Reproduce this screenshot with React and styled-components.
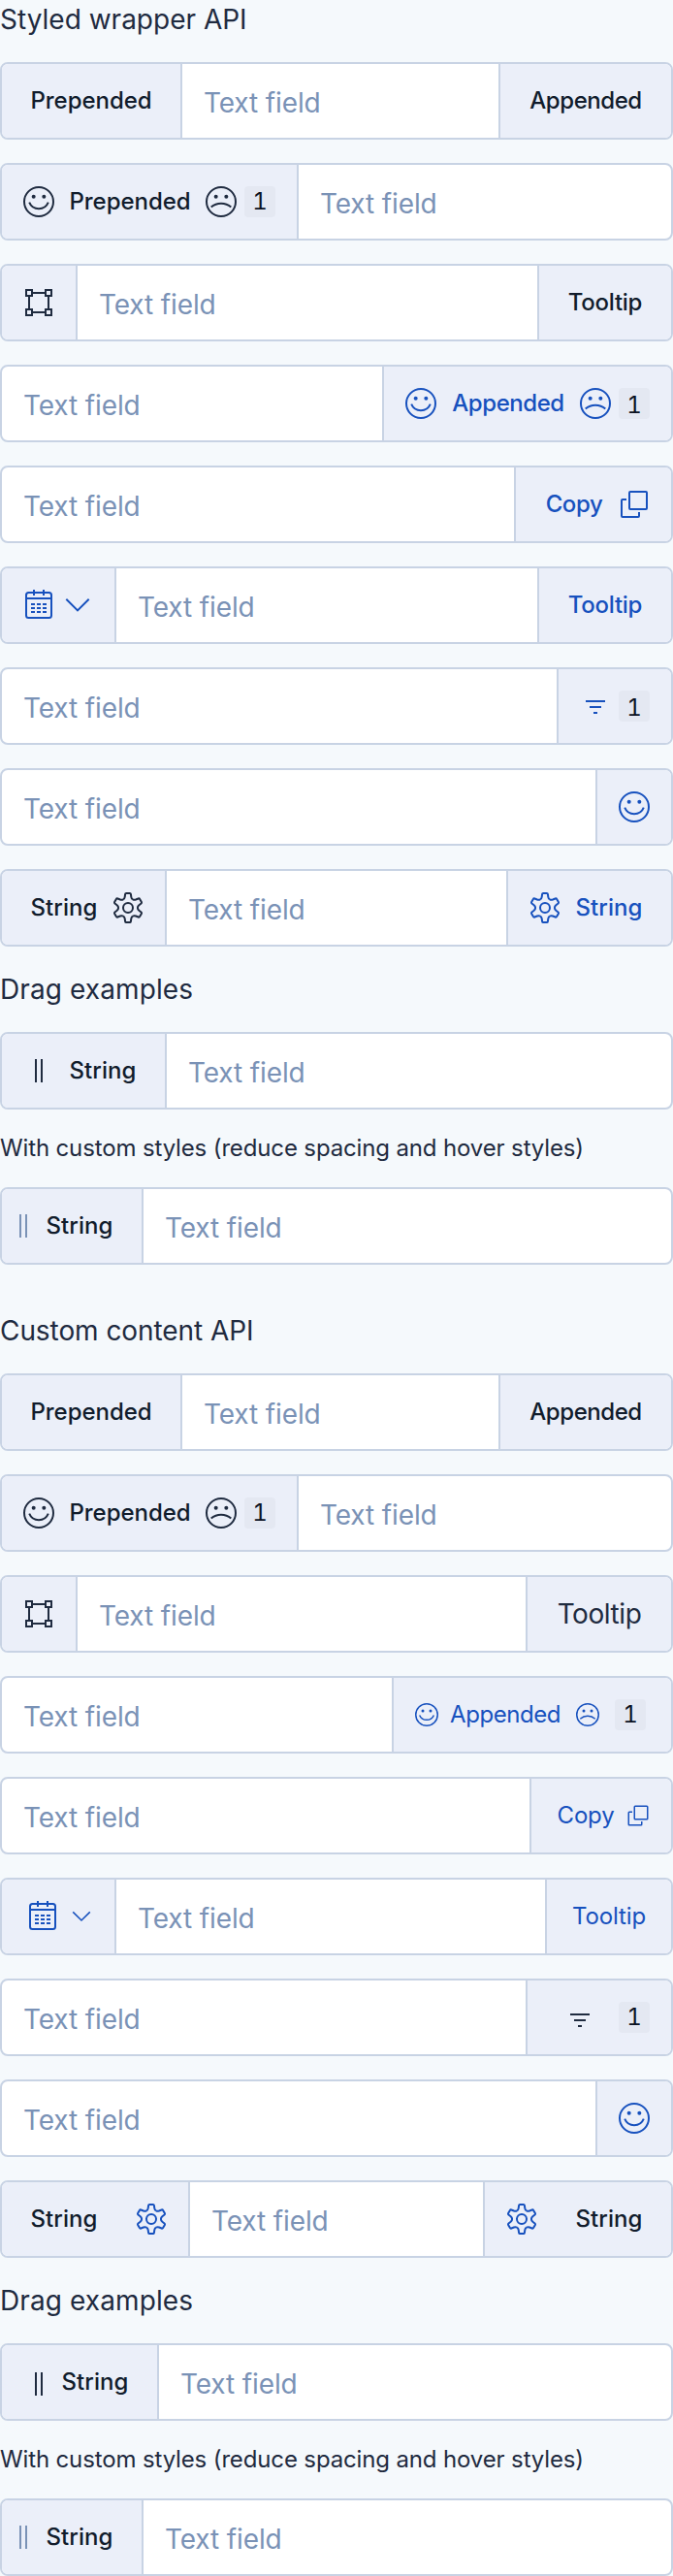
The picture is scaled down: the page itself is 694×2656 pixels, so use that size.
import React from "react";
import styled, { createGlobalStyle } from "styled-components";

const color = {
  page: "#f5f9fc",
  addon: "#ebeff9",
  border: "#c8d3e4",
  text: "#1f2b40",
  strong: "#111c2c",
  placeholder: "#7a92b6",
  action: "#1751be",
  badge: "#e4e8f2",
};

const GlobalStyle = createGlobalStyle`
  *, *::before, *::after { box-sizing: border-box; }
  body {
    margin: 0;
    background: ${color.page};
    color: ${color.text};
    font-family: Inter, "Liberation Sans", sans-serif;
  }
`;

const Page = styled.main`
  display: flex;
  flex-direction: column;
  gap: 48px;
`;

const Section = styled.section`
  display: flex;
  flex-direction: column;
  gap: 24px;
`;

const Heading = styled.h2`
  margin: 0;
  font-size: 28px;
  line-height: 40px;
  font-weight: 400;
  letter-spacing: ${(p) => p.$spacing ?? 0}px;
`;

const Note = styled.p`
  margin: 0;
  font-size: 24px;
  line-height: 32px;
  letter-spacing: -0.14px;
`;

const Group = styled.div`
  display: flex;
  height: 80px;
  border: 2px solid ${color.border};
  border-radius: 8px;
  background: #fff;
  overflow: hidden;
`;

const Field = styled.div`
  flex: 1;
  min-width: 0;
  display: flex;
  align-items: center;
  padding: 4px 22px 0;
  font-size: 28px;
  line-height: 40px;
  letter-spacing: -0.12px;
  color: ${color.placeholder};
`;

const Addon = styled.div`
  flex: none;
  display: flex;
  align-items: center;
  gap: ${(p) => p.$gap ?? 8}px;
  padding: 0 ${(p) => p.$padRight ?? 22}px 0 ${(p) => p.$padLeft ?? 22}px;
  background: ${color.addon};
  color: ${(p) => (p.$action ? color.action : color.text)};
`;

const Prepend = styled(Addon)`
  border-right: 2px solid ${color.border};
`;

const Append = styled(Addon)`
  border-left: 2px solid ${color.border};
`;

const Label = styled.span`
  width: ${(p) => p.$width}px;
  font-size: 24px;
  line-height: 32px;
  font-weight: 500;
  letter-spacing: ${(p) => p.$spacing ?? 0}px;
  text-align: center;
  white-space: nowrap;
  color: ${(p) => (p.$action ? color.action : color.strong)};
`;

const LinkText = styled.span`
  width: ${(p) => p.$width}px;
  margin-left: ${(p) => p.$pull ?? 0}px;
  font-size: 24px;
  line-height: 32px;
  font-weight: 400;
  letter-spacing: ${(p) => p.$spacing ?? 0}px;
  text-align: center;
  white-space: nowrap;
`;

const BodyText = styled.span`
  width: 104px;
  font-size: 28px;
  line-height: 40px;
  letter-spacing: -0.43px;
  text-align: center;
`;

const Badge = styled.span`
  width: 32px;
  height: 32px;
  padding-top: ${(p) => (p.$low ? 2 : 0)}px;
  border-radius: 4px;
  background: ${color.badge};
  color: #0b1222;
  font-size: 24px;
  line-height: 32px;
  font-weight: 400;
  font-variant-numeric: tabular-nums;
  text-align: center;
`;

const Svg = styled.svg`
  flex: none;
  display: block;
  width: ${(p) => p.$size}px;
  height: ${(p) => p.$size}px;
  margin-top: ${(p) => p.$drop}px;
  color: ${(p) => p.$tone ?? "inherit"};
  overflow: visible;
`;

const Icon = ({ size = 32, drop = 0, tone, children }) => (
  <Svg
    $size={size}
    $drop={drop}
    $tone={tone}
    viewBox="0 0 32 32"
    fill="none"
    stroke="currentColor"
    strokeWidth="2"
    aria-hidden="true"
  >
    {children}
  </Svg>
);

const Face = ({ mouth, ...rest }) => (
  <Icon {...rest}>
    <circle cx="16" cy="16" r="15" />
    <circle cx="10.67" cy="10.67" r="2" fill="currentColor" stroke="none" />
    <circle cx="21.33" cy="10.67" r="2" fill="currentColor" stroke="none" />
    <path d={mouth} />
  </Icon>
);

const Smile = (p) => <Face {...p} mouth="M6.2 16.6a10.6 10.6 0 0 0 19.6 0" />;
const Sad = (p) => <Face {...p} mouth="M5.7 21.6a15.6 15.6 0 0 1 20.6 0" />;

const Bounds = (p) => (
  <Icon {...p}>
    <path d="M3 3h6v6H3zM23 3h6v6h-6zM3 23h6v6H3zM23 23h6v6h-6zM10 6h12M10 26h12M6 10v12M26 10v12" />
  </Icon>
);

const Calendar = (p) => (
  <Icon {...p}>
    <rect x="3" y="3" width="26" height="26" rx="2.5" />
    <path d="M3 9h26M11 0v6M21 0v6M8 15h4M14 15h4M20 15h4M8 19h4M14 19h4M20 19h4M8 23h4M14 23h4M20 23h4" />
  </Icon>
);

const Chevron = (p) => (
  <Icon {...p}>
    <path d="M4.3 9.8 16 21.4 27.7 9.8" />
  </Icon>
);

const Copy = (p) => (
  <Icon {...p}>
    <rect x="11" y="3" width="18" height="18" rx="1" />
    <path d="M8 11H4a1 1 0 0 0-1 1v16a1 1 0 0 0 1 1h16a1 1 0 0 0 1-1v-4" />
  </Icon>
);

const Filter = (p) => (
  <Icon {...p}>
    <path d="M6 11h20M10 17h12M14 23h4" />
  </Icon>
);

const Drag = (p) => (
  <Icon {...p}>
    <path d="M13 4v24M19 4v24" />
  </Icon>
);

const TOOTH =
  "M-4.95-8.6C-3.9-9.2-3.5-10-3.3-11.2L-2.9-14Q-2.75-15-1.8-15H1.8Q2.75-15 2.9-14L3.3-11.2C3.5-10 3.9-9.2 4.95-8.6";

const Gear = (p) => (
  <Icon {...p}>
    <g transform="translate(16 16)">
      <circle r="5" />
      {[0, 60, 120, 180, 240, 300].map((deg) => (
        <path key={deg} d={TOOTH} transform={`rotate(${deg})`} />
      ))}
    </g>
  </Icon>
);

const TextRow = ({ before, after }) => (
  <Group>
    {before}
    <Field>Text field</Field>
    {after}
  </Group>
);

const PrependedLabel = () => <Label $width={140} $spacing={-0.05}>Prepended</Label>;
const AppendedLabel = (p) => <Label $width={132} $spacing={-0.45} $action={p.action}>Appended</Label>;
const TooltipLabel = (p) => <Label $width={92} $spacing={-0.28} $action={p.action}>Tooltip</Label>;
const StringLabel = (p) => <Label $width={84} $spacing={0.08} $action={p.action}>String</Label>;

const PrependedPlain = () => (
  <Prepend>
    <PrependedLabel />
  </Prepend>
);

const AppendedPlain = () => (
  <Append>
    <AppendedLabel />
  </Append>
);

const PrependedFull = () => (
  <Prepend>
    <Smile />
    <PrependedLabel />
    <Sad />
    <Badge>1</Badge>
  </Prepend>
);

const CustomDrag = () => (
  <Prepend $padLeft={6} $gap={0}>
    <Drag tone={color.placeholder} />
    <StringLabel />
  </Prepend>
);

const CUSTOM_NOTE = "With custom styles (reduce spacing and hover styles)";

export default function App() {
  return (
    <>
      <GlobalStyle />
      <Page>
        <Section>
          <Heading>Styled wrapper API</Heading>
          <TextRow before={<PrependedPlain />} after={<AppendedPlain />} />
          <TextRow before={<PrependedFull />} />
          <TextRow
            before={<Prepend><Bounds /></Prepend>}
            after={<Append><TooltipLabel /></Append>}
          />
          <TextRow
            after={
              <Append $action>
                <Smile />
                <AppendedLabel action />
                <Sad />
                <Badge $low>1</Badge>
              </Append>
            }
          />
          <TextRow
            after={
              <Append $action>
                <Label $action $width={76} $spacing={-0.4}>Copy</Label>
                <Copy />
              </Append>
            }
          />
          <TextRow
            before={<Prepend $action><Calendar /><Chevron /></Prepend>}
            after={<Append><TooltipLabel action /></Append>}
          />
          <TextRow after={<Append $action><Filter /><Badge $low>1</Badge></Append>} />
          <TextRow after={<Append $action><Smile /></Append>} />
          <TextRow
            before={<Prepend><StringLabel /><Gear /></Prepend>}
            after={<Append $action><Gear /><StringLabel action /></Append>}
          />
          <Heading $spacing={0.1}>Drag examples</Heading>
          <TextRow before={<Prepend><Drag /><StringLabel /></Prepend>} />
          <Note>{CUSTOM_NOTE}</Note>
          <TextRow before={<CustomDrag />} />
        </Section>

        <Section>
          <Heading $spacing={-0.07}>Custom content API</Heading>
          <TextRow before={<PrependedPlain />} after={<AppendedPlain />} />
          <TextRow before={<PrependedFull />} />
          <TextRow
            before={<Prepend><Bounds /></Prepend>}
            after={<Append><BodyText>Tooltip</BodyText></Append>}
          />
          <TextRow
            after={
              <Append $action $padRight={26} $gap={16}>
                <Smile size={24} />
                <LinkText $width={114} $pull={-4} $spacing={-0.45}>Appended</LinkText>
                <Sad size={24} />
                <Badge>1</Badge>
              </Append>
            }
          />
          <TextRow
            after={
              <Append $action $padLeft={26} $gap={12}>
                <LinkText $width={60} $spacing={-0.2}>Copy</LinkText>
                <Copy size={24} />
              </Append>
            }
          />
          <TextRow
            before={<Prepend $action $padLeft={26} $gap={12}><Calendar /><Chevron size={24} /></Prepend>}
            after={<Append $action $padLeft={26} $padRight={26}><LinkText $width={76} $spacing={-0.12}>Tooltip</LinkText></Append>}
          />
          <TextRow after={<Append $padLeft={38} $gap={24}><Filter drop={4} /><Badge>1</Badge></Append>} />
          <TextRow after={<Append $action><Smile /></Append>} />
          <TextRow
            before={<Prepend $gap={32}><StringLabel /><Gear tone={color.action} /></Prepend>}
            after={<Append $gap={32}><Gear tone={color.action} /><StringLabel /></Append>}
          />
          <Heading $spacing={0.1}>Drag examples</Heading>
          <TextRow before={<Prepend $gap={0}><Drag drop={4} /><StringLabel /></Prepend>} />
          <Note>{CUSTOM_NOTE}</Note>
          <TextRow before={<CustomDrag />} />
        </Section>
      </Page>
    </>
  );
}
